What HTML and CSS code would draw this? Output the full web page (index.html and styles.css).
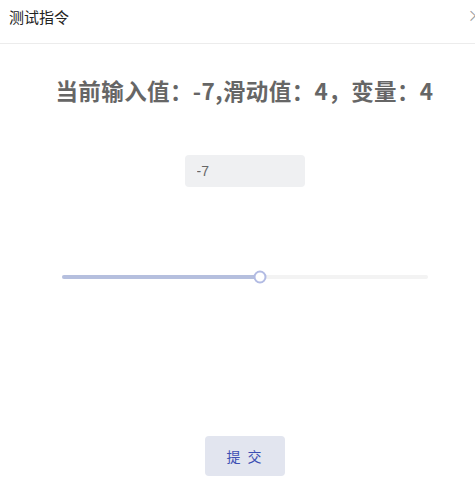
FILE: index.html
```html
<!DOCTYPE html>
<html lang="zh">
<head>
<meta charset="utf-8">
<link rel="stylesheet" href="styles.css">
</head>
<body>
<div class="dialog">
  <div class="header">
    <span class="header-title">测试指令</span>
    <span class="close">×</span>
  </div>
  <h2 class="status">当前输入值：-7,滑动值：4，变量：4</h2>
  <div class="input-row">
    <input class="num-input" type="text" value="-7">
  </div>
  <div class="slider-row">
    <div class="slider">
      <div class="fill" style="width: 54.1%"></div>
      <div class="knob" style="left: 54.1%"></div>
    </div>
  </div>
  <div class="btn-row">
    <button class="submit">提 交</button>
  </div>
</div>
</body>
</html>
```
FILE: styles.css
```css
html, body {
  margin: 0;
  padding: 0;
  background: #fff;
  font-family: "Noto Sans CJK SC", "Liberation Sans", sans-serif;
}
.dialog {
  width: 475px;
  height: 495px;
  overflow: hidden;
}
.header {
  position: relative;
  height: 43px;
  border-bottom: 1px solid #ececec;
  display: flex;
  align-items: center;
  padding-left: 9px;
  box-sizing: content-box;
}
.header-title {
  font-size: 15px;
  color: #222;
  margin-top: -11px;
}
.close {
  position: absolute;
  left: 467px;
  top: 3px;
  font-size: 20px;
  color: #999;
  font-family: "DejaVu Sans", sans-serif;
  font-weight: 300;
}
.status {
  margin: 31px 0 0;
  padding-left: 14px;
  text-align: center;
  font-size: 22.5px;
  letter-spacing: 0.4px;
  line-height: 30px;
  font-weight: bold;
  color: #666;
}
.input-row {
  display: flex;
  justify-content: center;
  margin-top: 50px;
}
.num-input {
  width: 120px;
  height: 32px;
  box-sizing: border-box;
  border: none;
  border-radius: 4px;
  background: #eff0f2;
  padding: 0 12px;
  font-size: 14px;
  color: #666;
  font-family: "Liberation Sans", sans-serif;
  outline: none;
  margin-left: 14px;
}
.slider-row {
  margin-top: 83px;
  padding: 0 47px 0 62px;
  height: 14px;
  display: flex;
  align-items: center;
}
.slider {
  position: relative;
  flex: 1;
  height: 4px;
  border-radius: 2px;
  background: #f3f3f3;
}
.fill {
  height: 100%;
  border-radius: 2px;
  background: #b5bfde;
}
.knob {
  position: absolute;
  top: 50%;
  width: 13px;
  height: 13px;
  box-sizing: border-box;
  border: 2px solid #b2bbe3;
  border-radius: 50%;
  background: #fff;
  transform: translate(-50%, -50%);
}
.btn-row {
  display: flex;
  justify-content: center;
  margin-top: 152px;
  padding-left: 15px;
}
.submit {
  width: 80px;
  height: 40px;
  border: none;
  border-radius: 4px;
  background: #e2e5ef;
  color: #3c4fb3;
  font-size: 14px;
  font-family: "Noto Sans CJK SC", sans-serif;
  letter-spacing: 2px;
  padding: 0;
}
```
